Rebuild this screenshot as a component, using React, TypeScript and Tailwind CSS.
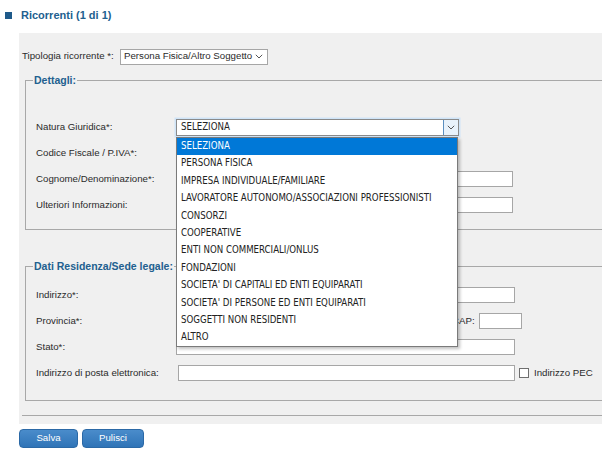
import React from "react";

const items = [
  "SELEZIONA",
  "PERSONA FISICA",
  "IMPRESA INDIVIDUALE/FAMILIARE",
  "LAVORATORE AUTONOMO/ASSOCIAZIONI PROFESSIONISTI",
  "CONSORZI",
  "COOPERATIVE",
  "ENTI NON COMMERCIALI/ONLUS",
  "FONDAZIONI",
  "SOCIETA' DI CAPITALI ED ENTI EQUIPARATI",
  "SOCIETA' DI PERSONE ED ENTI EQUIPARATI",
  "SOGGETTI NON RESIDENTI",
  "ALTRO",
];

function Chevron() {
  return (
    <svg width="8" height="5" viewBox="0 0 8 5" className="block">
      <path d="M0.8 0.8 L4 4 L7.2 0.8" fill="none" stroke="#555" strokeWidth="1" />
    </svg>
  );
}

function Input({ w }: { w: string }) {
  return <div className={`h-[16px] bg-white border border-[#a6a6a6] ${w}`} />;
}

function Row({ label, children }: { label: string; children?: React.ReactNode }) {
  return (
    <div className="h-[26px] flex items-center pl-[3px]">
      <div className="w-[140px] shrink-0">{label}</div>
      {children}
    </div>
  );
}

export default function App() {
  return (
    <div className="w-[610px] h-[454px] bg-white relative font-['Liberation_Sans',Arial,sans-serif] text-[9.7px] text-[#2a2a2a] overflow-hidden">
      {/* header */}
      <div className="h-[33px] flex items-center pb-[3px] pl-[5px]">
        <div className="w-[7px] h-[7px] bg-[#1f5a8a]" />
        <div className="ml-[9px] text-[11px] font-bold text-[#22608f]">Ricorrenti (1 di 1)</div>
      </div>

      {/* panel */}
      <div className="ml-[19px] w-[583px] bg-[#f0f0f0] pt-[15px] pb-[8px]">
        <div className="h-[17px] flex items-center pl-[3px]">
          <div className="w-[98px] shrink-0">Tipologia ricorrente *:</div>
          <div className="w-[148px] h-[16px] bg-white border border-[#a6a6a6] flex items-center pl-[3px] pr-[4px]">
            <span className="flex-1">Persona Fisica/Altro Soggetto</span>
            <Chevron />
          </div>
        </div>

        {/* Dettagli */}
        <fieldset className="mt-[8px] ml-[6px] border border-r-0 border-[#a8a8a8] pl-[7px] pt-[27px] pb-[11px]">
          <legend className="px-[1px] text-[10.5px] leading-[14px] font-bold text-[#22608f]">Dettagli:</legend>
          <Row label="Natura Giuridica*:">
            <div className="relative z-10">
              <div className="w-[283px] h-[17px] bg-white border border-[#8a8a8a] shadow-[0_0_0_1.5px_#cfe4f7] flex items-center">
                <span className="flex-1 pl-[4px] font-['DejaVu_Sans_Condensed','DejaVu_Sans',sans-serif] [font-stretch:condensed] text-[9.6px] text-[#222]">SELEZIONA</span>
                <div className="w-[15px] h-[15px] bg-[#e8f2fb] border-l border-[#5b8fc0] flex items-center justify-center">
                  <Chevron />
                </div>
              </div>
              <div className="absolute top-[18px] left-0 w-[282px] bg-white border border-[#7a7a7a] shadow-[2px_2px_3px_rgba(0,0,0,0.25)] font-['DejaVu_Sans_Condensed','DejaVu_Sans',sans-serif] [font-stretch:condensed] text-[9.6px] text-[#222]">
                {items.map((t, i) => (
                  <div
                    key={t}
                    className={
                      i === 0
                        ? "h-[17.4px] flex items-center pl-[4px] bg-[#0078d7] text-white"
                        : "h-[17.4px] flex items-center pl-[4px] whitespace-nowrap"
                    }
                  >
                    {t}
                  </div>
                ))}
              </div>
            </div>
          </Row>
          <Row label="Codice Fiscale / P.IVA*:">
            <Input w="w-[200px]" />
          </Row>
          <Row label="Cognome/Denominazione*:">
            <Input w="w-[337px]" />
          </Row>
          <Row label="Ulteriori Informazioni:">
            <Input w="w-[337px]" />
          </Row>
        </fieldset>

        {/* Residenza */}
        <fieldset className="mt-[29px] ml-[6px] border border-r-0 border-[#a8a8a8] pl-[7px] pt-[9px] pb-[14px]">
          <legend className="px-[1px] text-[10.5px] leading-[14px] font-bold text-[#22608f]">Dati Residenza/Sede legale:</legend>
          <Row label="Indirizzo*:">
            <Input w="w-[339px]" />
          </Row>
          <Row label="Provincia*:">
            <Input w="w-[260px]" />
            <span className="ml-[16px]">CAP:</span>
            <div className="ml-[4px]">
              <Input w="w-[43px]" />
            </div>
          </Row>
          <Row label="Stato*:">
            <Input w="w-[339px]" />
          </Row>
          <div className="h-[26px] flex items-center pl-[3px]">
            <div className="w-[142px] shrink-0">Indirizzo di posta elettronica:</div>
            <Input w="w-[337px]" />
            <div className="ml-[4px] w-[10px] h-[10px] bg-white border border-[#6f6f6f]" />
            <span className="ml-[5px]">Indirizzo PEC</span>
          </div>
        </fieldset>

        <div className="mt-[14px] ml-[3px] border-t border-[#a8a8a8]" />
      </div>

      {/* buttons */}
      <div className="mt-[5px] ml-[19px] flex gap-[4px]">
        <button className="w-[59px] h-[19px] rounded-[4px] border border-[#2b69a6] bg-gradient-to-b from-[#4a8ccb] to-[#2f74b7] text-white text-[9.7px]">
          Salva
        </button>
        <button className="w-[62px] h-[19px] rounded-[4px] border border-[#2b69a6] bg-gradient-to-b from-[#4a8ccb] to-[#2f74b7] text-white text-[9.7px]">
          Pulisci
        </button>
      </div>
    </div>
  );
}
